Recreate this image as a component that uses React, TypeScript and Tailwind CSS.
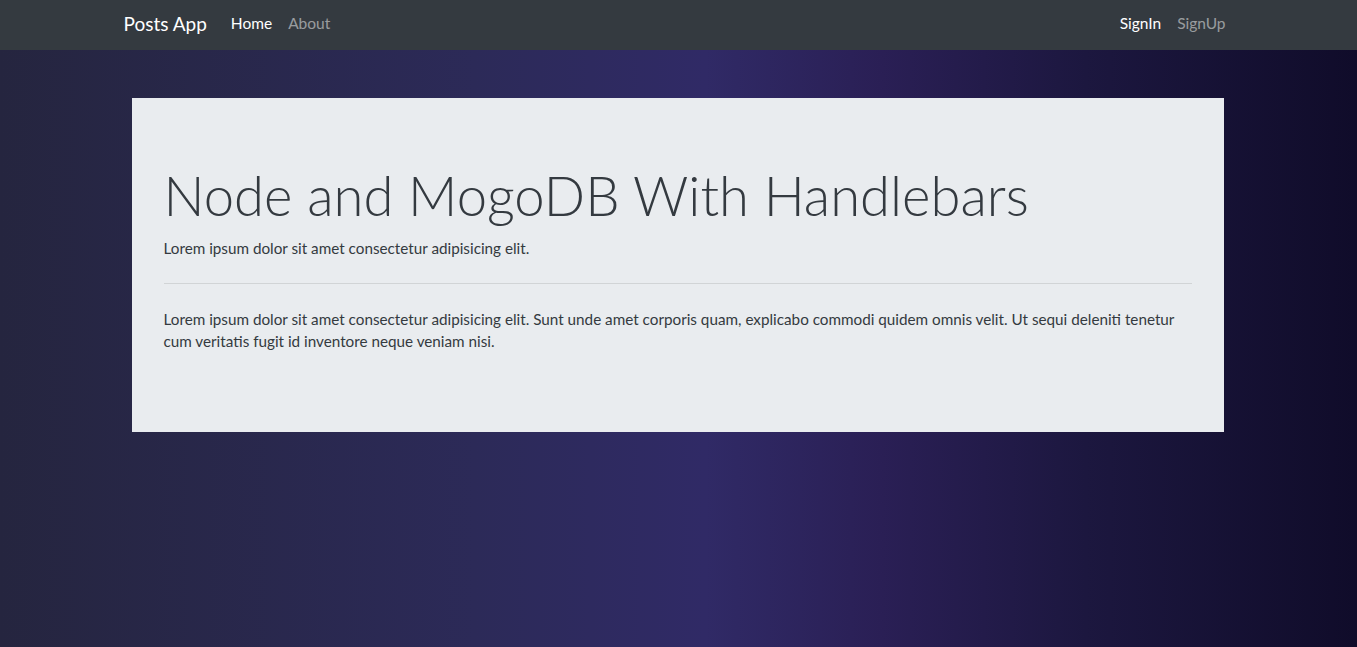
export default function App() {
  return (
    <div className="min-h-screen bg-[linear-gradient(90deg,#25253f_0%,#2c2a58_35%,#302a66_52%,#2a1f55_65%,#1c173f_80%,#100c2a_100%)] font-['Lato',sans-serif]">
      <nav className="h-[50px] bg-[#343a40]">
        <div className="mx-auto flex h-full w-[1110px] items-center pb-[3px]">
          <a className="mr-4 text-[19px] leading-[30px] text-white">Posts App</a>
          <ul className="flex">
            <li className="px-2 text-[15.5px] text-white">Home</li>
            <li className="px-2 text-[15.5px] text-white/50">About</li>
          </ul>
          <ul className="ml-auto flex">
            <li className="px-2 text-[15.5px] text-white">SignIn</li>
            <li className="px-2 text-[15.5px] text-white/50">SignUp</li>
          </ul>
        </div>
      </nav>

      <div className="mx-auto mt-12 w-[1092px] -translate-x-px bg-[#e9ecef] px-8 py-16 text-[#343a40]">
        <h1 className="mb-2 text-[54.4px] font-light leading-[67px]">Node and MogoDB With Handlebars</h1>
        <p className="text-[15.25px] leading-[22px]">Lorem ipsum dolor sit amet consectetur adipisicing elit.</p>
        <hr className="my-6 border-t border-black/10" />
        <p className="mb-4 text-[15.25px] leading-[22px]">
          Lorem ipsum dolor sit amet consectetur adipisicing elit. Sunt unde amet corporis quam, explicabo commodi quidem omnis velit. Ut sequi deleniti tenetur cum veritatis fugit id inventore neque veniam nisi.
        </p>
      </div>
    </div>
  );
}
